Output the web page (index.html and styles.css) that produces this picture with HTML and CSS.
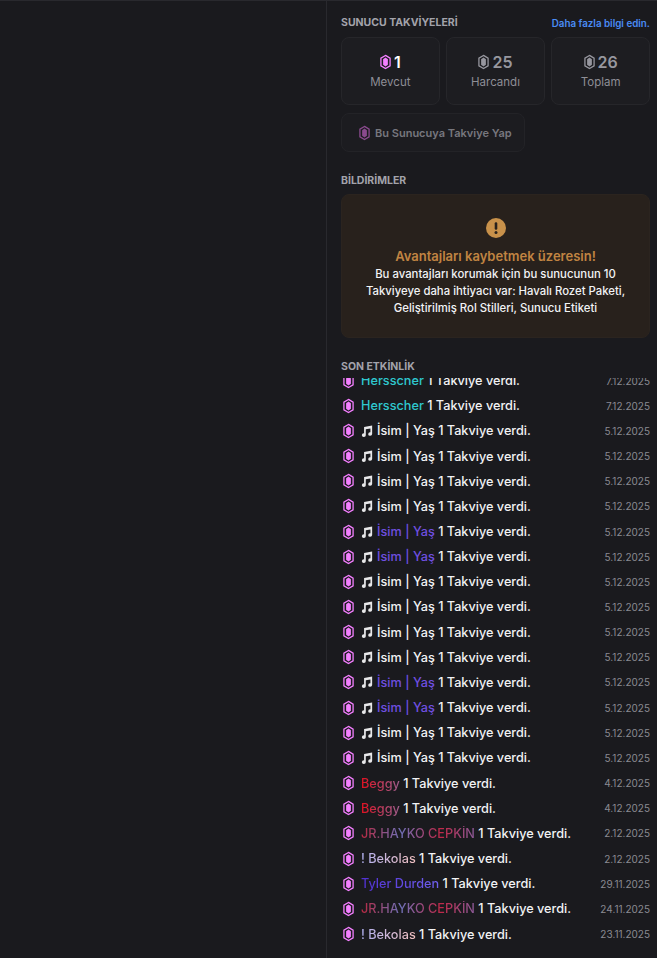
FILE: index.html
```html
<!DOCTYPE html>
<html lang="tr">
<head>
  <meta charset="UTF-8">
  <title>Sunucu Takviyeleri</title>
  <link rel="stylesheet" href="styles.css">
</head>
<body>
  <svg class="defs" width="0" height="0">
    <symbol id="gem" viewBox="0 0 12 16">
      <path d="M6 .8 11 3.8v8.4L6 15.2 1 12.2V3.8z" fill="none" stroke="currentColor" stroke-width="1.4"/>
      <path d="M6 3.2 8.6 5v6L6 12.8 3.4 11V5z" fill="currentColor"/>
    </symbol>
    <symbol id="note" viewBox="0 0 14 14">
      <path d="M3.6 2.2 13 .6v10a2.3 2.1 0 1 1-2-2.1V4L5.6 4.9v7a2.3 2.1 0 1 1-2-2.1z" fill="currentColor"/>
    </symbol>
  </svg>
  <div class="page">
    <div class="left-pane"></div>
    <div class="panel">
      <div class="section-head">
        <h2>SUNUCU TAKVİYELERİ</h2>
        <a class="more" href="#">Daha fazla bilgi edin.</a>
      </div>
      <div class="stats">
        <div class="stat">
          <div class="stat-value active"><svg class="gem"><use href="#gem"/></svg>1</div>
          <div class="stat-label">Mevcut</div>
        </div>
        <div class="stat">
          <div class="stat-value"><svg class="gem"><use href="#gem"/></svg>25</div>
          <div class="stat-label">Harcandı</div>
        </div>
        <div class="stat">
          <div class="stat-value"><svg class="gem"><use href="#gem"/></svg>26</div>
          <div class="stat-label">Toplam</div>
        </div>
      </div>
      <button class="boost-btn"><svg class="gem"><use href="#gem"/></svg>Bu Sunucuya Takviye Yap</button>

      <h2 class="notice-title">BİLDİRİMLER</h2>
      <div class="notice">
        <svg class="warn" viewBox="0 0 20 20">
          <circle cx="10" cy="10" r="10" fill="#c8914a"/>
          <rect x="8.7" y="4.2" width="2.6" height="7.6" rx="1.2" fill="#28211c"/>
          <circle cx="10" cy="14.6" r="1.5" fill="#28211c"/>
        </svg>
        <div class="notice-head">Avantajları kaybetmek üzeresin!</div>
        <p>Bu avantajları korumak için bu sunucunun 10 Takviyeye daha ihtiyacı var: Havalı Rozet Paketi, Geliştirilmiş Rol Stilleri, Sunucu Etiketi</p>
      </div>

      <h2 class="activity-title">SON ETKİNLİK</h2>
      <div class="activity">
        <ul class="rows" id="rows"></ul>
      </div>
    </div>
  </div>

  <script>
    const note = '<svg class="note"><use href="#note"/></svg>';
    const isim = { name: 'İsim | Yaş', cls: 'plain', icon: true };
    const mor = { name: 'İsim | Yaş', cls: 'purple', icon: true };
    const hers = { name: 'Hersscher', cls: 'teal' };
    const beggy = { name: 'Beggy', cls: 'beggy' };
    const hayko = { name: 'JR.HAYKO CEPKİN', cls: 'hayko' };
    const bekolas = { name: '! Bekolas', cls: 'bekolas' };
    const tyler = { name: 'Tyler Durden', cls: 'tyler' };

    const activity = [
      [hers, '7.12.2025'], [hers, '7.12.2025'],
      [isim, '5.12.2025'], [isim, '5.12.2025'], [isim, '5.12.2025'], [isim, '5.12.2025'],
      [mor, '5.12.2025'], [mor, '5.12.2025'],
      [isim, '5.12.2025'], [isim, '5.12.2025'], [isim, '5.12.2025'], [isim, '5.12.2025'],
      [mor, '5.12.2025'], [mor, '5.12.2025'],
      [isim, '5.12.2025'], [isim, '5.12.2025'],
      [beggy, '4.12.2025'], [beggy, '4.12.2025'],
      [hayko, '2.12.2025'], [bekolas, '2.12.2025'],
      [tyler, '29.11.2025'], [hayko, '24.11.2025'], [bekolas, '23.11.2025']
    ];

    document.getElementById('rows').innerHTML = activity.map(function (row) {
      const user = row[0];
      return '<li class="row"><svg class="gem"><use href="#gem"/></svg>' +
        '<span class="line">' + (user.icon ? note : '') +
        '<span class="user ' + user.cls + '">' + user.name + '</span> 1 Takviye verdi.</span>' +
        '<span class="date">' + row[1] + '</span></li>';
    }).join('');
  </script>
</body>
</html>
```

FILE: styles.css
```css
body {
  margin: 0;
  background-color: #1a1a1e;
  color: #f2f3f5;
  font-family: Inter, Arial, sans-serif;
  overflow: hidden;
}

.defs {
  display: block;
  height: 0;
}

.page {
  display: flex;
  height: 958px;
  border-top: 1px solid #29292e;
  box-sizing: border-box;
}

.left-pane {
  width: 326px;
  flex-shrink: 0;
  background-color: #1a1a1e;
}

.panel {
  flex: 1;
  min-width: 0;
  display: flex;
  flex-direction: column;
  padding: 14px 7px 0 14px;
  border-left: 1px solid #29292e;
  overflow: hidden;
}

h2 {
  margin: 0;
  font-size: 10.5px;
  line-height: 16px;
  font-weight: 700;
  color: #a3a3ab;
}

.section-head {
  display: flex;
  justify-content: space-between;
  align-items: center;
  height: 16px;
}

.more {
  color: #4a8cf5;
  font-size: 9.8px;
  font-weight: 600;
  text-decoration: none;
}

.stats {
  display: flex;
  gap: 6.5px;
  margin-top: 6px;
}

.stat {
  flex: 1;
  height: 68px;
  box-sizing: border-box;
  padding-top: 14px;
  background-color: #1d1d21;
  border: 1px solid #26262a;
  border-radius: 8px;
  text-align: center;
}

.stat-value {
  display: flex;
  justify-content: center;
  align-items: center;
  gap: 3px;
  color: #97979f;
  font-size: 16px;
  line-height: 20px;
  font-weight: 600;
}

.stat-value .gem {
  width: 11px;
  height: 16px;
}

.stat-value.active {
  color: #ffffff;
}

.stat-value.active .gem {
  color: #f47fff;
}

.stat-label {
  color: #8e8e96;
  font-size: 11.5px;
  line-height: 18px;
  margin-top: 1px;
}

.boost-btn {
  display: flex;
  align-items: center;
  gap: 5px;
  width: 184px;
  height: 39px;
  margin-top: 8px;
  padding: 0 0 0 17px;
  background-color: #1c1c20;
  border: 1px solid #232327;
  border-radius: 8px;
  color: #77777e;
  font-family: inherit;
  font-size: 11px;
  font-weight: 600;
}

.boost-btn .gem {
  width: 11px;
  height: 16px;
  color: #8a4a8e;
}

.notice-title {
  margin-top: 21px;
}

.notice {
  height: 144px;
  box-sizing: border-box;
  margin-top: 5px;
  padding: 23px 14px 0;
  background-color: #28211c;
  border: 1px solid #2b241f;
  border-radius: 8px;
  text-align: center;
}

.warn {
  display: block;
  width: 20px;
  height: 20px;
  margin: 0 auto;
}

.notice-head {
  margin-top: 9px;
  color: #c08442;
  font-size: 13px;
  line-height: 18px;
  font-weight: 600;
}

.notice p {
  margin: 1px 0 0;
  color: #f2f3f5;
  font-size: 11.35px;
  line-height: 17px;
  font-weight: 500;
}

.activity-title {
  margin-top: 21px;
}

.activity {
  flex: 1;
  min-height: 0;
  margin-top: 3px;
  overflow: hidden;
}

.rows {
  list-style: none;
  margin: -10px 0 0;
  padding: 0;
}

.row {
  display: flex;
  align-items: center;
  height: 25.17px;
}

.row .gem {
  width: 11px;
  height: 16px;
  margin-left: 2px;
  margin-right: 7px;
  flex-shrink: 0;
  color: #f47fff;
}

.line {
  flex: 1;
  display: flex;
  align-items: center;
  white-space: pre;
  font-size: 12.7px;
  font-weight: 500;
  color: #f2f3f5;
}

.note {
  width: 12px;
  height: 12px;
  margin-right: 4px;
  color: #e8e8ea;
}

.date {
  color: #8a8a92;
  font-size: 10px;
}

.plain {
  color: #f2f3f5;
}

.purple {
  color: #6f4fe0;
}

.teal {
  color: #2fc8cf;
}

.beggy {
  background: linear-gradient(90deg, #e01020, #a06090);
  -webkit-background-clip: text;
  color: transparent;
}

.hayko {
  background: linear-gradient(90deg, #b82840, #7070b8 35%, #c02848 70%, #8a5a98);
  -webkit-background-clip: text;
  color: transparent;
}

.bekolas {
  background: linear-gradient(90deg, #b0b0f0, #f0c0c0);
  -webkit-background-clip: text;
  color: transparent;
}

.tyler {
  background: linear-gradient(90deg, #5030d0, #7060f0);
  -webkit-background-clip: text;
  color: transparent;
}
```
